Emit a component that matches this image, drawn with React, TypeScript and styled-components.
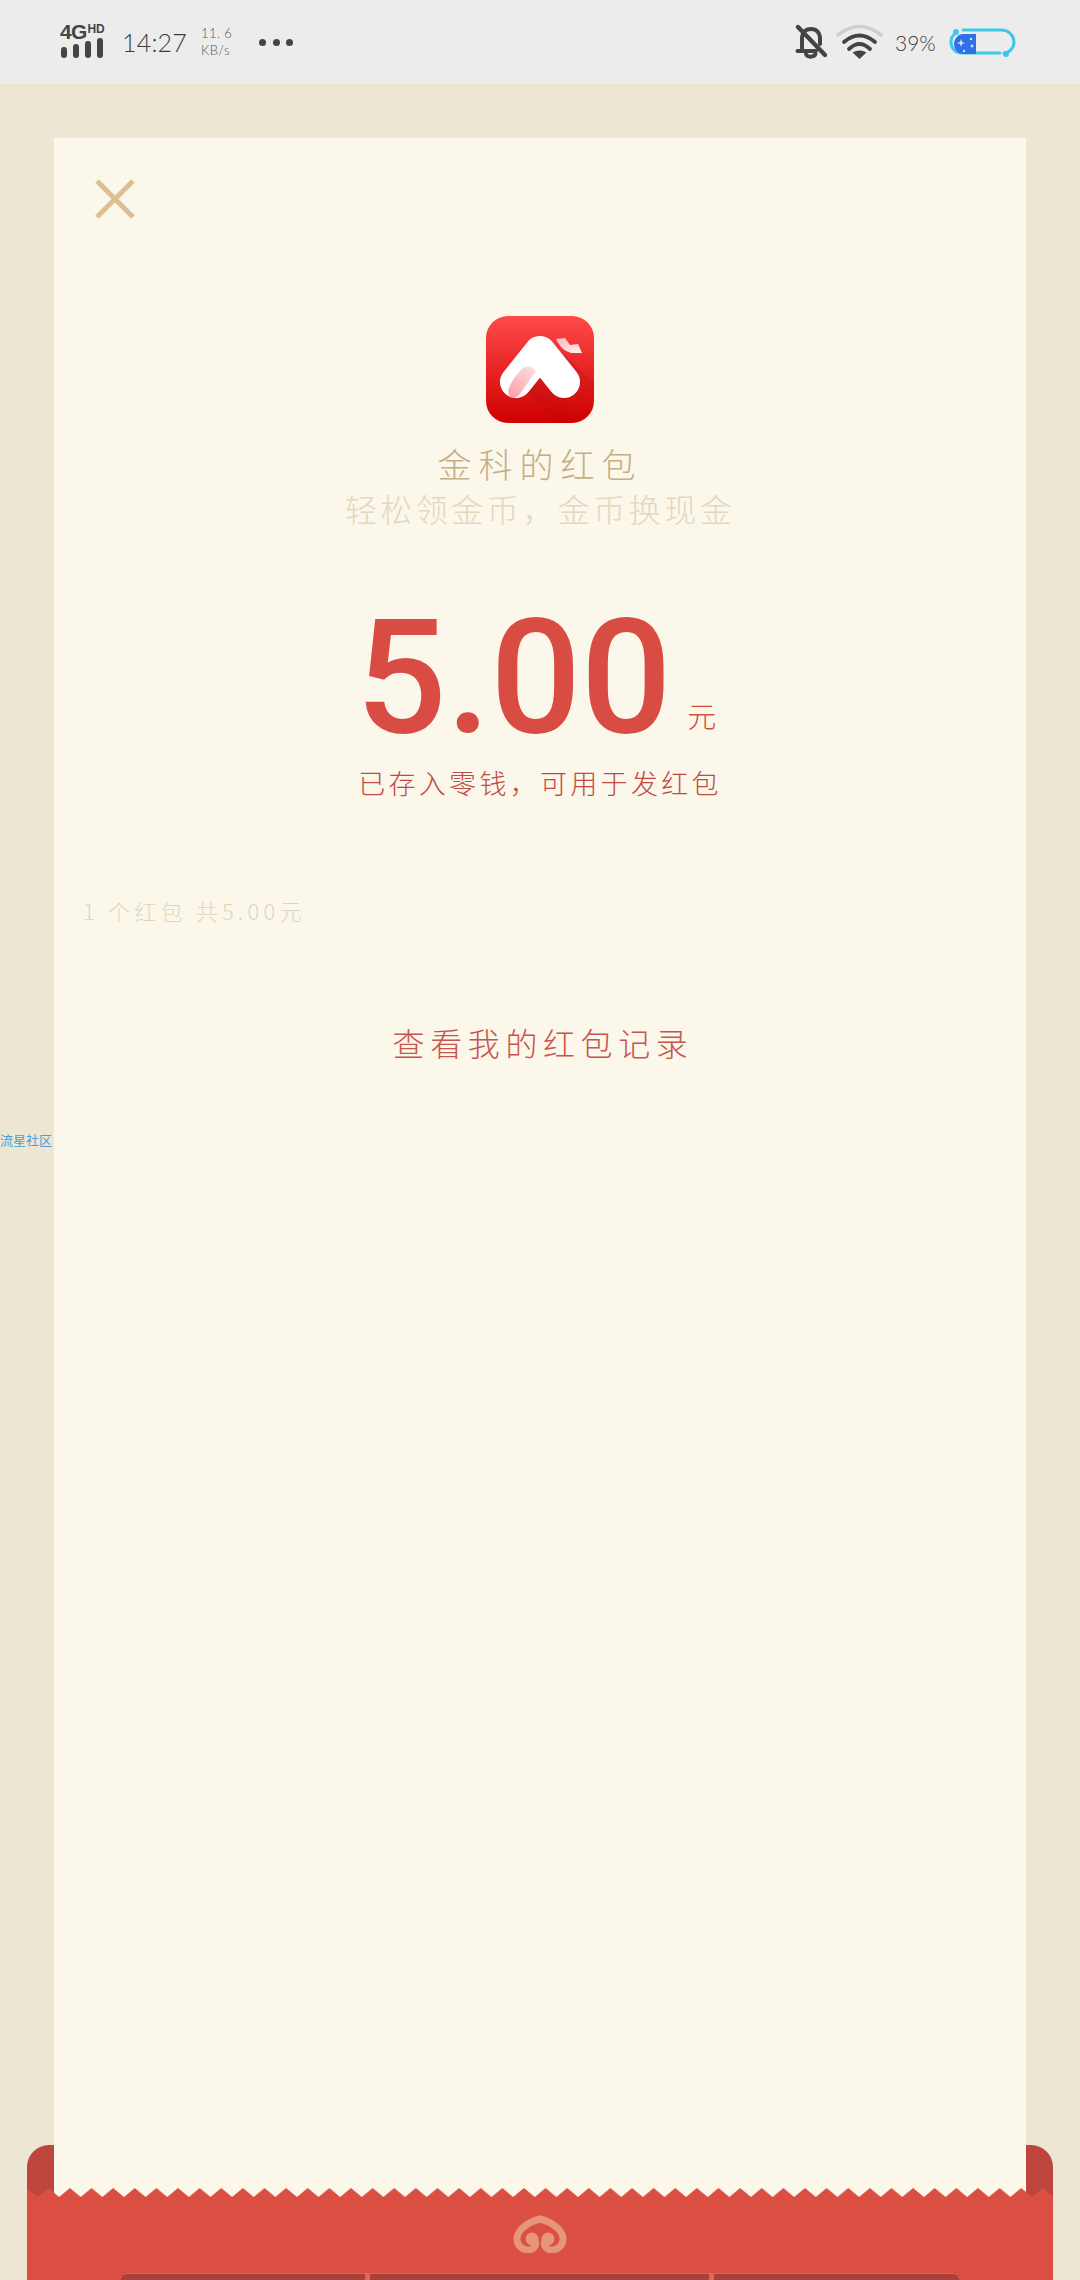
import React from 'react';
import styled, { createGlobalStyle } from 'styled-components';

const GlobalStyle = createGlobalStyle`
    html, body {
        margin: 0;
        padding: 0;
        background: #ede6d3;
    }
`;

const CJK = `"Noto Sans CJK SC", "Noto Sans", sans-serif`;

const Page = styled.div`
    width: 1080px;
    height: 2280px;
    position: relative;
    overflow: hidden;
    background: #ede6d3;
    font-family: ${CJK};
`;

const StatusBar = styled.div`
    height: 84px;
    background: #ececec;
    display: flex;
    align-items: center;
    justify-content: space-between;
    padding: 0 63px 0 60px;
    box-sizing: border-box;
    color: #444;
`;

const StatusGroup = styled.div`
    display: flex;
    align-items: center;
`;

const Network = styled.div`
    width: 46px;
    display: flex;
    flex-direction: column;
    margin-top: -6px;
`;

const NetworkLabel = styled.div`
    font-family: "Liberation Sans", sans-serif;
    font-weight: 700;
    font-size: 21px;
    line-height: 17px;
    height: 17px;
    letter-spacing: -0.8px;
    white-space: nowrap;
    b {
        font-size: 12px;
        vertical-align: 6px;
        letter-spacing: 0;
        margin-left: 1px;
    }
`;

const SignalBars = styled.div`
    display: flex;
    align-items: flex-end;
    gap: 6px;
    height: 20px;
    margin-left: 1px;
`;

const SignalBar = styled.span<{ $h: number }>`
    width: 6px;
    height: ${({ $h }) => $h}px;
    border-radius: 3px;
    background: #444;
`;

const Clock = styled.div`
    font-family: "Lato", sans-serif;
    font-weight: 300;
    font-size: 25px;
    letter-spacing: 0.2px;
    color: #3c3c3c;
    margin-left: 16px;
`;

const Speed = styled.div`
    font-family: "Lato", sans-serif;
    font-weight: 300;
    font-size: 13px;
    line-height: 17px;
    color: #555;
    margin-left: 14px;
    letter-spacing: 0.4px;
`;

const Dots = styled.div`
    display: flex;
    gap: 6.5px;
    margin-left: 27px;
`;

const Dot = styled.span`
    width: 7px;
    height: 7px;
    border-radius: 50%;
    background: #444;
`;

const BellIcon = styled.svg`
    display: block;
    margin-right: 8px;
`;

const BatteryText = styled.div`
    font-family: "Lato", sans-serif;
    font-weight: 300;
    font-size: 21px;
    color: #3c3c3c;
    margin: 0 13px 0 10px;
    width: 39px;
    white-space: nowrap;
`;

const Stage = styled.main`
    padding: 54px 54px 0;
`;

const Card = styled.section`
    position: relative;
    z-index: 1;
    height: 2059px;
    background: #fbf7ea;
    display: flex;
    flex-direction: column;
    align-items: center;
`;

const CloseButton = styled.button`
    align-self: flex-start;
    margin: 41px 0 0 41px;
    padding: 0;
    width: 40px;
    height: 40px;
    border: none;
    background: none;
    display: block;
`;

const Logo = styled.svg`
    margin-top: 97px;
    width: 108px;
    height: 107px;
    display: block;
`;

const Title = styled.h1`
    margin: 17px 0 0;
    font-size: 34px;
    line-height: 48px;
    font-weight: 300;
    letter-spacing: 7px;
    color: #c5ae85;
`;

const Slogan = styled.div`
    font-size: 32px;
    line-height: 40px;
    font-weight: 300;
    letter-spacing: 3.5px;
    color: #e2d8bf;
`;

const AmountRow = styled.div`
    margin: 68px 8px 0 0;
    height: 164px;
    white-space: nowrap;
    color: #d94c43;
`;

const Amount = styled.span`
    font-family: Roboto, sans-serif;
    font-weight: 500;
    font-size: 160px;
    line-height: 164px;
    letter-spacing: -0.5px;
`;

const Unit = styled.span`
    font-size: 29px;
    line-height: 30px;
    font-weight: 300;
    margin-left: 16px;
    vertical-align: 4px;
`;

const Notice = styled.div`
    margin-top: 3px;
    font-size: 27px;
    line-height: 40px;
    font-weight: 300;
    letter-spacing: 3.3px;
    color: #bf4a42;
`;

const Summary = styled.div`
    align-self: flex-start;
    margin: 91px 0 0 29px;
    font-size: 22px;
    line-height: 32px;
    font-weight: 300;
    letter-spacing: 4.2px;
    color: #e0d6be;
`;

const RecordLink = styled.a`
    margin: 93px 0 0 6px;
    font-size: 32px;
    line-height: 46px;
    font-weight: 300;
    letter-spacing: 5.6px;
    color: #c8554d;
`;

const Watermark = styled.div`
    position: absolute;
    left: 0;
    top: 1131px;
    font-size: 13px;
    line-height: 18px;
    color: #4a9fe0;
`;

const Envelope = styled.div`
    position: absolute;
    left: 27px;
    right: 27px;
    bottom: 0;
    height: 135px;
`;

const Flap = styled.div`
    position: absolute;
    left: 0;
    right: 0;
    top: 0;
    height: 60px;
    background: #bd453d;
    border-radius: 22px 22px 0 0;
`;

const Front = styled.div`
    position: absolute;
    z-index: 2;
    left: 0;
    right: 0;
    top: 43px;
    bottom: 0;
    display: flex;
    flex-direction: column;
    align-items: center;
`;

const Teeth = styled.svg`
    display: block;
    width: 100%;
    height: 10px;
    flex: none;
`;

const FrontBody = styled.div`
    flex: 1;
    align-self: stretch;
    background: #db4f42;
    display: flex;
    flex-direction: column;
    align-items: center;
`;

const Seal = styled.svg`
    margin-top: 17px;
    width: 54px;
    height: 38px;
    display: block;
    flex: none;
`;

const Tabs = styled.div`
    margin-top: 20px;
    display: flex;
    gap: 5px;
    width: 838px;
    height: 12px;
    flex: none;
    background: #e0645a;
    border-radius: 6px 6px 0 0;
`;

const Tab = styled.div<{ $w: number; $side?: 'left' | 'right' }>`
    width: ${({ $w }) => $w}px;
    background: #a8403b;
    border-top: 1px solid #e0645a;
    box-sizing: border-box;
    border-radius: ${({ $side }) =>
        $side === 'left' ? '6px 0 0 0' : $side === 'right' ? '0 6px 0 0' : '0'};
`;

function Bell() {
    return (
        <BellIcon width="32" height="36" viewBox="0 0 32 36" fill="none" stroke="#444" strokeWidth="4" strokeLinecap="round" strokeLinejoin="round">
            <path d="M7 26V15C7 9 10 5 16 5C22 5 25 9 25 15V20" />
            <path d="M2.5 27H21" />
            <path d="M11 30C12 33.5 19 33.5 20.5 30" />
            <path d="M3 3L30 31" strokeWidth="4.4" />
        </BellIcon>
    );
}

function Wifi() {
    return (
        <svg width="50" height="36" viewBox="0 0 50 36" fill="none" strokeLinecap="round">
            <path d="M3 11Q24.5 -6 46 11" stroke="#cfcfcf" strokeWidth="3.6" />
            <path d="M9 18Q24.5 5 40 18" stroke="#444" strokeWidth="3.8" />
            <path d="M14 25Q24.5 15 35 25" stroke="#444" strokeWidth="3.8" />
            <path d="M17.5 28.5Q24.5 24.5 31.5 28.5L24.5 35Z" fill="#444" />
        </svg>
    );
}

function Battery() {
    return (
        <svg width="70" height="30" viewBox="0 0 70 30" fill="none">
            <path d="M8 7C5 9 4 12 4 15C4 22 9 26 15 26H53" stroke="#3cc8e6" strokeWidth="3" strokeLinecap="round" />
            <path d="M16 3H54C62 3 67 9 67 15C67 21 62 26 57 26" stroke="#3cc8e6" strokeWidth="3" strokeLinecap="round" />
            <circle cx="9" cy="5" r="3" fill="#3cc8e6" />
            <circle cx="59" cy="27" r="3" fill="#3cc8e6" />
            <path d="M16 7H29V27H16C11 27 7 22 7 17C7 12 11 7 16 7Z" fill="#2f6fe8" />
            <path d="M14 12L15 15L18 16L15 17L14 20L13 17L10 16L13 15Z" fill="#cfe4ff" />
            <circle cx="24" cy="12" r="1.2" fill="#cfe4ff" />
            <circle cx="25" cy="19" r="1.4" fill="#cfe4ff" />
            <circle cx="17" cy="24" r="1.2" fill="#cfe4ff" />
        </svg>
    );
}

export default function App() {
    return (
        <Page>
            <GlobalStyle />
            <StatusBar>
                <StatusGroup>
                    <Network>
                        <NetworkLabel>4G<b>HD</b></NetworkLabel>
                        <SignalBars>
                            <SignalBar $h={11} />
                            <SignalBar $h={14} />
                            <SignalBar $h={17} />
                            <SignalBar $h={20} />
                        </SignalBars>
                    </Network>
                    <Clock>14:27</Clock>
                    <Speed>
                        <div>11. 6</div>
                        <div>KB/s</div>
                    </Speed>
                    <Dots>
                        <Dot />
                        <Dot />
                        <Dot />
                    </Dots>
                </StatusGroup>
                <StatusGroup>
                    <Bell />
                    <Wifi />
                    <BatteryText>39%</BatteryText>
                    <Battery />
                </StatusGroup>
            </StatusBar>

            <Stage>
                <Card>
                    <CloseButton aria-label="close">
                        <svg width="40" height="40" viewBox="0 0 40 40" stroke="#dcbf93" strokeWidth="5">
                            <path d="M2 2L38 38M38 2L2 38" />
                        </svg>
                    </CloseButton>
                    <Logo viewBox="0 0 108 107">
                        <defs>
                            <linearGradient id="logoBg" x1="0" y1="0" x2="0" y2="1">
                                <stop offset="0" stopColor="#ff4a4a" />
                                <stop offset="1" stopColor="#cf0000" />
                            </linearGradient>
                            <linearGradient id="logoShade" x1="0.3" y1="0" x2="0.8" y2="1">
                                <stop offset="0" stopColor="#900000" stopOpacity="0.32" />
                                <stop offset="1" stopColor="#900000" stopOpacity="0" />
                            </linearGradient>
                            <linearGradient id="logoFold" x1="0" y1="1" x2="1" y2="0">
                                <stop offset="0" stopColor="#fb9ea4" />
                                <stop offset="1" stopColor="#fde2e2" />
                            </linearGradient>
                            <linearGradient id="logoBow" x1="0" y1="0" x2="1" y2="1">
                                <stop offset="0" stopColor="#fbb6b8" />
                                <stop offset="1" stopColor="#fff4f0" />
                            </linearGradient>
                        </defs>
                        <rect width="108" height="107" rx="22" fill="url(#logoBg)" />
                        <path d="M66 28L108 66V107H70L30 66Z" fill="url(#logoShade)" />
                        <path d="M30 66L54 36L78 66" fill="none" stroke="#fff" strokeWidth="32" strokeLinecap="round" strokeLinejoin="round" />
                        <path d="M23 79C20 72 29 60 36 53C40 49 46 50 50 55L34 78C31 82 26 83 23 79Z" fill="url(#logoFold)" />
                        <path d="M70 23L79 22L84 29L92 28L96 37L85 37C78 35 73 30 70 23Z" fill="url(#logoBow)" />
                    </Logo>
                    <Title>金科的红包</Title>
                    <Slogan>轻松领金币，金币换现金</Slogan>
                    <AmountRow>
                        <Amount>5.00</Amount>
                        <Unit>元</Unit>
                    </AmountRow>
                    <Notice>已存入零钱，可用于发红包</Notice>
                    <Summary>1 个红包 共5.00元</Summary>
                    <RecordLink>查看我的红包记录</RecordLink>
                </Card>
            </Stage>

            <Watermark>流星社区</Watermark>

            <Envelope>
                <Flap />
                <Front>
                    <Teeth>
                        <defs>
                            <pattern id="teeth" width="21.62" height="10" patternUnits="userSpaceOnUse" x="10.5">
                                <path d="M0 10L0 9L10.81 0L21.62 9L21.62 10Z" fill="#db4f42" />
                            </pattern>
                        </defs>
                        <rect width="100%" height="10" fill="url(#teeth)" />
                    </Teeth>
                    <FrontBody>
                        <Seal viewBox="0 0 54 38" fill="none" stroke="#e6957a" strokeWidth="7" strokeLinecap="round">
                            <path d="M27 4C15 7 4 15 4 24C4 31 10 35 15 35C21 35 24 30 22 26" />
                            <path d="M27 4C39 7 50 15 50 24C50 31 44 35 39 35C33 35 30 30 32 26" />
                            <circle cx="19" cy="24" r="3" fill="#e6957a" />
                            <circle cx="35" cy="24" r="3" fill="#e6957a" />
                        </Seal>
                        <Tabs>
                            <Tab $w={244} $side="left" />
                            <Tab $w={339} />
                            <Tab $w={245} $side="right" />
                        </Tabs>
                    </FrontBody>
                </Front>
            </Envelope>
        </Page>
    );
}
